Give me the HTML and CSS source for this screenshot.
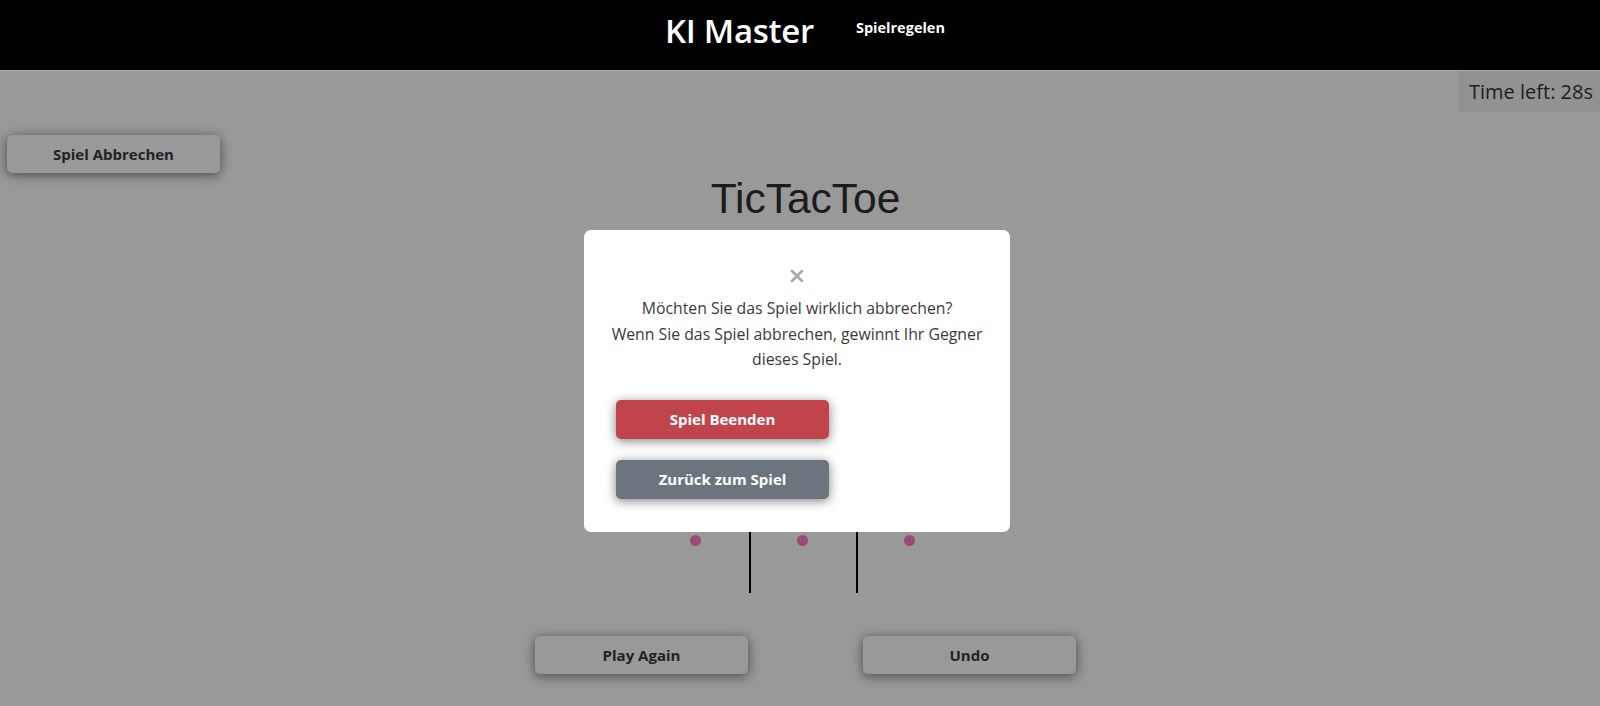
FILE: index.html
```html
<!DOCTYPE html>
<html lang="de">
<head>
<meta charset="utf-8">
<title>KI Master – TicTacToe</title>
<link rel="stylesheet" href="styles.css">
</head>
<body>
<header class="site-header">
  <h1 class="brand">KI Master</h1>
  <a class="nav-link" href="#">Spielregelen</a>
</header>
<main class="page">
  <div class="timer-row"><div class="timer">Time left: 28s</div></div>
  <button class="btn btn-light abort">Spiel Abbrechen</button>
  <h2 class="title">TicTacToe</h2>
  <div class="board">
    <div class="cell"><span class="dot"></span></div>
    <div class="cell"><span class="dot"></span></div>
    <div class="cell"><span class="dot"></span></div>
    <div class="cell"><span class="dot"></span></div>
    <div class="cell"><span class="dot"></span></div>
    <div class="cell"><span class="dot"></span></div>
    <div class="cell"><span class="dot"></span></div>
    <div class="cell"><span class="dot"></span></div>
    <div class="cell"><span class="dot"></span></div>
  </div>
  <div class="actions">
    <button class="btn btn-light action">Play Again</button>
    <button class="btn btn-light action">Undo</button>
  </div>
</main>
<div class="overlay">
  <div class="modal">
    <button class="close" aria-label="Schließen">
      <svg width="14" height="14" viewBox="0 0 14 14"><path d="M2 2 L12 12 M12 2 L2 12" stroke="#aaaaaa" stroke-width="2.8" stroke-linecap="round"/></svg>
    </button>
    <p class="modal-text">Möchten Sie das Spiel wirklich abbrechen?<br>Wenn Sie das Spiel abbrechen, gewinnt Ihr Gegner dieses Spiel.</p>
    <button class="btn btn-danger mbtn">Spiel Beenden</button>
    <button class="btn btn-secondary mbtn">Zurück zum Spiel</button>
  </div>
</div>
</body>
</html>
```
FILE: styles.css
```css
* { box-sizing: border-box; }
html, body { margin: 0; padding: 0; }
body {
  font-family: "Open Sans", "Noto Sans", sans-serif;
  background: #ffffff;
  color: #333;
  height: 706px;
  overflow: hidden;
}
.site-header {
  position: relative;
  z-index: 2;
  height: 71px;
  background: #000;
  display: flex;
  justify-content: center;
  align-items: flex-start;
  gap: 42px;
  padding-left: 10px;
  border-bottom: 1px solid #a8a8a8;
}
.brand {
  margin: 8px 0 0;
  font-size: 33px;
  font-weight: 600;
  color: #fff;
  line-height: 46px;
  letter-spacing: -0.3px;
}
.nav-link {
  margin-top: 18px;
  color: #fff;
  font-size: 14.5px;
  font-weight: 700;
  text-decoration: none;
  line-height: 20px;
}
.page { display: flex; flex-direction: column; }
.timer-row { display: flex; justify-content: flex-end; }
.timer {
  height: 41px;
  background: #f4f4f4;
  font-size: 20px;
  line-height: 41px;
  padding: 0 7px 0 11px;
  color: #333;
}
.btn {
  font-family: inherit;
  border: none;
  border-radius: 5px;
  cursor: pointer;
  font-weight: 700;
}
.btn-light {
  background: #fff;
  color: #3a3a3a;
  font-size: 15px;
  box-shadow: 0 2px 12px rgba(0,0,0,0.55);
}
.abort {
  align-self: flex-start;
  margin: 23px 0 0 7px;
  width: 213px;
  height: 38px;
}
.title {
  margin: 1.5px 0 0;
  padding-left: 11px;
  text-align: center;
  font-family: "Liberation Sans", Arial, sans-serif;
  font-weight: 400;
  font-size: 42.5px;
  line-height: 48px;
  color: #303030;
}
.board {
  margin: 51.5px 0 0 calc(50% - 156px);
  display: grid;
  grid-template-columns: repeat(3, 105px);
  grid-template-rows: repeat(3, 105px);
  gap: 2px;
  background: #000;
  width: 319px;
}
.cell {
  background: #fff;
  display: flex;
  align-items: center;
  justify-content: center;
}
.dot {
  width: 11px;
  height: 11px;
  border-radius: 50%;
  margin-right: 2px;
  background: #ff7cc6;
}
.actions {
  margin-top: 43px;
  display: flex;
  justify-content: center;
  gap: 115px;
  padding-left: 11px;
}
.action { width: 213px; height: 38px; }
.overlay {
  position: fixed;
  z-index: 1;
  inset: 0;
  background: rgba(0,0,0,0.4);
  display: flex;
  justify-content: center;
  align-items: flex-start;
  padding: 230px 6px 0 0;
}
.modal {
  width: 426px;
  background: #fff;
  border-radius: 7px;
  padding: 39px 20px 33px;
  display: flex;
  flex-direction: column;
  align-items: flex-start;
}
.close {
  align-self: center;
  background: none;
  border: none;
  padding: 0;
  width: 14px;
  height: 14px;
  display: block;
}
.close svg { display: block; }
.modal-text {
  margin: 13px 0 0;
  align-self: stretch;
  text-align: center;
  font-size: 15.8px;
  line-height: 25.5px;
  color: #3a3a3a;
}
.mbtn {
  width: 213px;
  height: 39px;
  margin-left: 12px;
  color: #fff;
  font-size: 15px;
  box-shadow: 0 2px 11px rgba(0,0,0,0.5);
}
.btn-danger { background: #c1444c; margin-top: 27px; }
.btn-secondary { background: #6c757d; margin-top: 21px; }
```
